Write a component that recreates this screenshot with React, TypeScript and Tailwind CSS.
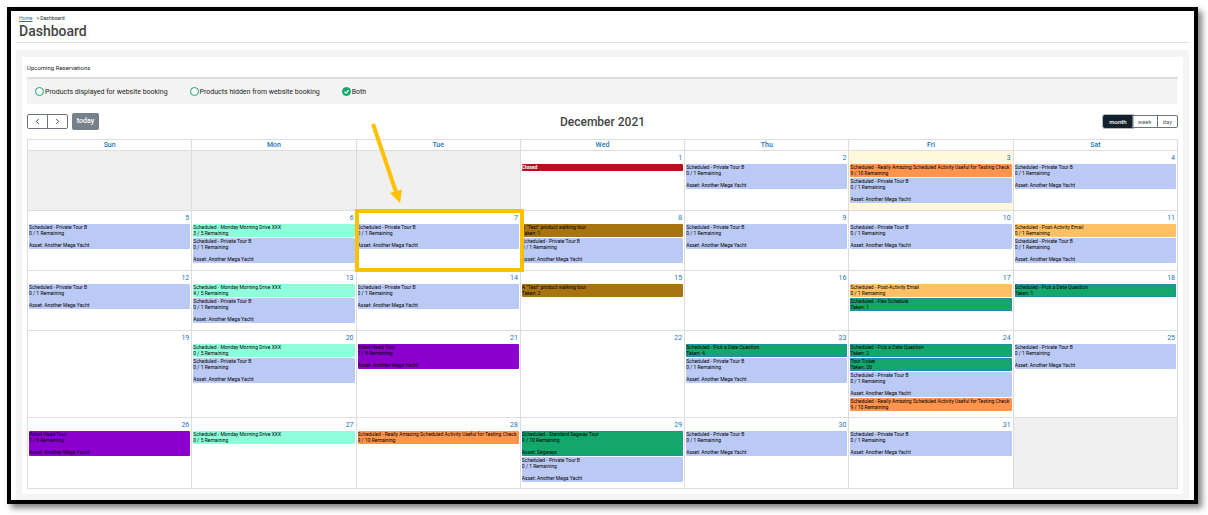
import { useState } from "react";
import clsx from "clsx";

type Tone = "blue" | "mint" | "orange" | "amber" | "green" | "brown" | "purple" | "red";

interface CalendarEvent {
  title: string;
  tone: Tone;
  status?: string;
  asset?: string;
}

interface Day {
  date: number | null;
  today?: boolean;
  highlighted?: boolean;
  events?: CalendarEvent[];
}

const TONES: Record<Tone, string> = {
  blue: "bg-[#bbc9f5] text-black",
  mint: "bg-[#8fffdb] text-black",
  orange: "bg-[#ff944d] text-black",
  amber: "bg-[#ffc066] text-black",
  green: "bg-[#14a76c] text-black inset-ring inset-ring-[#1f8fa8]",
  brown: "bg-[#a87412] text-black",
  purple: "bg-[#8b00cc] text-black",
  red: "bg-[#b81023] text-white font-bold",
};

const yacht: CalendarEvent = {
  title: "Scheduled - Private Tour B",
  tone: "blue",
  status: "0 / 1 Remaining",
  asset: "Another Mega Yacht",
};

const robot: CalendarEvent = {
  title: "Robot Head Tour",
  tone: "purple",
  status: "7 / 8 Remaining",
  asset: "Another Mega Yacht",
};

const amazing: CalendarEvent = {
  title: "Scheduled - Really Amazing Scheduled Activity Useful for Testing Check",
  tone: "orange",
  status: "9 / 10 Remaining",
};

const email: CalendarEvent = {
  title: "Scheduled - Post-Activity Email",
  tone: "amber",
  status: "0 / 1 Remaining",
};

const drive = (left: number): CalendarEvent => ({
  title: "Scheduled - Monday Morning Drive XXX",
  tone: "mint",
  status: `${left} / 5 Remaining`,
});

const walking = (taken: number): CalendarEvent => ({
  title: 'A "Test" product walking tour',
  tone: "brown",
  status: `Taken: ${taken}`,
});

const green = (title: string, status: string, asset?: string): CalendarEvent => ({
  title,
  tone: "green",
  status,
  asset,
});

const WEEKS: Day[][] = [
  [
    { date: null },
    { date: null },
    { date: null },
    { date: 1, events: [{ title: "Closed", tone: "red" }] },
    { date: 2, events: [yacht] },
    { date: 3, today: true, events: [amazing, yacht] },
    { date: 4, events: [yacht] },
  ],
  [
    { date: 5, events: [yacht] },
    { date: 6, events: [drive(3), yacht] },
    { date: 7, highlighted: true, events: [yacht] },
    { date: 8, events: [walking(1), yacht] },
    { date: 9, events: [yacht] },
    { date: 10, events: [yacht] },
    { date: 11, events: [email, yacht] },
  ],
  [
    { date: 12, events: [yacht] },
    { date: 13, events: [drive(4), yacht] },
    { date: 14, events: [yacht] },
    { date: 15, events: [walking(2)] },
    { date: 16 },
    { date: 17, events: [email, green("Scheduled - Flex Schedule", "Taken: 1")] },
    { date: 18, events: [green("Scheduled - Pick a Date Question", "Taken: 1")] },
  ],
  [
    { date: 19 },
    { date: 20, events: [drive(0), yacht] },
    { date: 21, events: [robot] },
    { date: 22 },
    { date: 23, events: [green("Scheduled - Pick a Date Question", "Taken: 4"), yacht] },
    {
      date: 24,
      events: [
        green("Scheduled - Pick a Date Question", "Taken: 2"),
        green("Tour Ticket", "Taken: 20"),
        yacht,
        amazing,
      ],
    },
    { date: 25, events: [yacht] },
  ],
  [
    { date: 26, events: [robot] },
    { date: 27, events: [drive(0)] },
    { date: 28, events: [amazing] },
    {
      date: 29,
      events: [green("Scheduled - Standard Segway Tour", "9 / 10 Remaining", "Segways"), yacht],
    },
    { date: 30, events: [yacht] },
    { date: 31, events: [yacht] },
    { date: null },
  ],
];

const WEEKDAYS = ["Sun", "Mon", "Tue", "Wed", "Thu", "Fri", "Sat"];
const FILTERS = [
  "Products displayed for website booking",
  "Products hidden from website booking",
  "Both",
];
const VIEWS = ["month", "week", "day"];

function EventCard({ event }: { event: CalendarEvent }) {
  return (
    <div
      className={clsx(
        "overflow-hidden whitespace-nowrap rounded-[1px] pb-px text-[5px] leading-[6px]",
        TONES[event.tone]
      )}
    >
      <div>{event.title}</div>
      {event.status && <div>{event.status}</div>}
      {event.asset && <div className="pt-[6px]">Asset: {event.asset}</div>}
    </div>
  );
}

function Callout() {
  return (
    <>
      <div className="pointer-events-none absolute -top-[2px] -right-1 -bottom-[2px] -left-[2px] z-10 border-4 border-[#ffc000]" />
      <svg
        className="pointer-events-none absolute -top-[90px] left-0 z-10"
        width="60"
        height="85"
        viewBox="0 0 60 85"
        aria-hidden="true"
      >
        <path d="M16 3L39 71" stroke="#ffc000" strokeWidth="4" fill="none" />
        <path d="M33 72L45 68.5L43 82Z" fill="#ffc000" />
      </svg>
    </>
  );
}

function DayCell({ day }: { day: Day }) {
  return (
    <td
      className={clsx(
        "relative border border-[#dddddd] p-0 align-top",
        day.date == null && "bg-[#f0f0f0]",
        day.today && "bg-[#fff8dd]"
      )}
    >
      {day.date != null && (
        <div className="px-px pb-[6px]">
          <div className="h-[13px] pr-px text-right text-[7px] leading-[14px] text-[#1b75bb]">
            {day.date}
          </div>
          <div className="flex flex-col gap-px">
            {day.events?.map((event, i) => (
              <EventCard key={i} event={event} />
            ))}
          </div>
        </div>
      )}
      {day.highlighted && <Callout />}
    </td>
  );
}

function FilterOption({
  label,
  checked,
  onSelect,
}: {
  label: string;
  checked: boolean;
  onSelect: () => void;
}) {
  return (
    <label className="flex items-center gap-px text-[7px] leading-[8px] text-[#222222]">
      <span className="grid">
        <input
          type="radio"
          name="visibility"
          checked={checked}
          onChange={onSelect}
          className="col-start-1 row-start-1 size-[9px] appearance-none rounded-full border border-[#14a76c] bg-white checked:bg-[#14a76c]"
        />
        {checked && (
          <svg
            className="pointer-events-none col-start-1 row-start-1 size-[9px]"
            viewBox="0 0 9 9"
            aria-hidden="true"
          >
            <path d="M2.4 4.6L4 6.1L6.7 3.1" stroke="#ffffff" strokeWidth="1.3" fill="none" />
          </svg>
        )}
      </span>
      {label}
    </label>
  );
}

function Chevron({ d }: { d: string }) {
  return (
    <svg width="5" height="7" viewBox="0 0 5 7" aria-hidden="true">
      <path d={d} stroke="#444c55" strokeWidth="1" fill="none" />
    </svg>
  );
}

export default function App() {
  const [filter, setFilter] = useState("Both");
  const [view, setView] = useState("month");

  return (
    <div className="bg-white pt-[7px] pr-[10px] pb-3 pl-[7px] font-['Roboto',sans-serif] text-[#444444]">
      <div className="border-4 border-black bg-white px-[5px] pt-1 shadow-[4px_4px_6px_rgba(0,0,0,0.5)]">
        {/* Page header */}
        <header className="border-b border-[#dddddd] pb-[2px] pl-[3px]">
          <nav aria-label="Breadcrumb" className="flex gap-1 text-[5px] leading-[7px] text-[#222222]">
            <a href="#home" className="text-[#1b75bb] underline">
              Home
            </a>
            <span>&gt; Dashboard</span>
          </nav>
          <h1 className="text-[14px] leading-[18px] font-medium">Dashboard</h1>
        </header>

        <main className="mt-[7px] bg-[#f4f4f4] px-[6px] pt-[7px] pb-[6px]">
          <section className="bg-white px-[5px] pt-[7px] pb-[5px]">
            <h2 className="border-b-2 border-[#dddddd] pb-[5px] text-[6px] leading-[8px] text-[#222222]">
              Upcoming Reservations
            </h2>

            {/* Visibility filter */}
            <div className="flex h-[25px] items-center gap-[22px] bg-[#f4f4f4] px-2">
              {FILTERS.map((label) => (
                <FilterOption
                  key={label}
                  label={label}
                  checked={filter === label}
                  onSelect={() => setFilter(label)}
                />
              ))}
            </div>

            {/* Toolbar */}
            <div className="mt-[9px] mb-[9px] grid grid-cols-[1fr_auto_1fr] items-center">
              <div className="flex items-center gap-1">
                <div className="flex">
                  <button
                    aria-label="Previous month"
                    className="flex h-[15px] w-[21px] items-center justify-center rounded-l-[2px] border border-[#6b747d]"
                  >
                    <Chevron d="M3.8 1L1.3 3.5L3.8 6" />
                  </button>
                  <button
                    aria-label="Next month"
                    className="-ml-px flex h-[15px] w-[21px] items-center justify-center rounded-r-[2px] border border-[#6b747d]"
                  >
                    <Chevron d="M1.2 1L3.7 3.5L1.2 6" />
                  </button>
                </div>
                <button className="h-[17px] w-[27px] rounded-[2px] bg-[#75808a] text-[7px] leading-[17px] font-medium text-white">
                  today
                </button>
              </div>
              <h2 className="text-[12px] leading-[16px] font-medium">December 2021</h2>
              <div className="flex justify-end">
                {VIEWS.map((name) => (
                  <button
                    key={name}
                    onClick={() => setView(name)}
                    className={clsx(
                      "-ml-px h-[13px] border px-[5px] text-[6px] leading-[11px] first:rounded-l-[2px] last:rounded-r-[2px]",
                      view === name
                        ? "border-[#14202b] bg-[#14202b] font-medium text-white ring-1 ring-[#b4b9be]"
                        : "border-[#6b747d] text-[#555e66]"
                    )}
                  >
                    {name}
                  </button>
                ))}
              </div>
            </div>

            {/* Month grid */}
            <table className="w-full table-fixed border-collapse">
              <thead>
                <tr className="h-[11px]">
                  {WEEKDAYS.map((name) => (
                    <th
                      key={name}
                      className="border border-[#dddddd] p-0 text-[7px] leading-[10px] font-medium text-[#1b75bb]"
                    >
                      {name}
                    </th>
                  ))}
                </tr>
              </thead>
              <tbody>
                {WEEKS.map((week, i) => (
                  <tr key={i} className="h-[60px]">
                    {week.map((day, j) => (
                      <DayCell key={j} day={day} />
                    ))}
                  </tr>
                ))}
              </tbody>
            </table>
          </section>
        </main>
      </div>
    </div>
  );
}
